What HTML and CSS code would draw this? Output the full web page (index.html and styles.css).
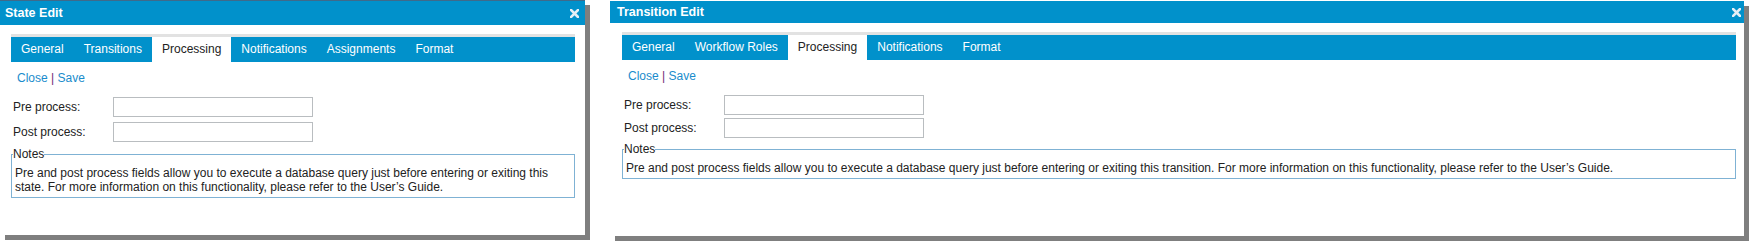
FILE: index.html
```html
<!DOCTYPE html>
<html lang="en">
<head>
    <meta charset="UTF-8">
    <title>Workflow Editors</title>
    <link rel="stylesheet" href="styles.css">
</head>
<body>
    <div class="desk">
        <div class="dialog dialog-state">
            <div class="titlebar">
                <span class="title">State Edit</span>
                <span class="close-btn">
                    <svg width="9" height="9" viewBox="0 0 9 9"><path d="M1 1 L8 8 M8 1 L1 8" stroke="#e6eef5" stroke-width="2.6" stroke-linecap="square"/></svg>
                </span>
            </div>
            <div class="dialog-body">
                <ul class="tabs">
                    <li>General</li>
                    <li>Transitions</li>
                    <li class="active">Processing</li>
                    <li>Notifications</li>
                    <li>Assignments</li>
                    <li>Format</li>
                </ul>
                <div class="actions"><a href="#">Close</a> <span class="sep">|</span> <a href="#">Save</a></div>
                <div class="form">
                    <div class="row"><label for="pre1">Pre process:</label><input type="text" id="pre1"></div>
                    <div class="row"><label for="post1">Post process:</label><input type="text" id="post1"></div>
                </div>
                <fieldset class="notes">
                    <legend>Notes</legend>
                    <p>Pre and post process fields allow you to execute a database query just before entering or exiting this state. For more information on this functionality, please refer to the User’s Guide.</p>
                </fieldset>
            </div>
        </div>

        <div class="dialog dialog-transition">
            <div class="titlebar">
                <span class="title">Transition Edit</span>
                <span class="close-btn">
                    <svg width="9" height="9" viewBox="0 0 9 9"><path d="M1 1 L8 8 M8 1 L1 8" stroke="#e6eef5" stroke-width="2.6" stroke-linecap="square"/></svg>
                </span>
            </div>
            <div class="dialog-body">
                <ul class="tabs">
                    <li>General</li>
                    <li>Workflow Roles</li>
                    <li class="active">Processing</li>
                    <li>Notifications</li>
                    <li>Format</li>
                </ul>
                <div class="actions"><a href="#">Close</a> <span class="sep">|</span> <a href="#">Save</a></div>
                <div class="form">
                    <div class="row"><label for="pre2">Pre process:</label><input type="text" id="pre2"></div>
                    <div class="row"><label for="post2">Post process:</label><input type="text" id="post2"></div>
                </div>
                <fieldset class="notes">
                    <legend>Notes</legend>
                    <p>Pre and post process fields allow you to execute a database query just before entering or exiting this transition. For more information on this functionality, please refer to the User’s Guide.</p>
                </fieldset>
            </div>
        </div>
    </div>
</body>
</html>
```

FILE: styles.css
```css
body {
    margin: 0;
    font-family: "Liberation Sans", Arial, sans-serif;
    font-size: 12px;
    color: #222;
    background-color: #fff;
}

.desk {
    display: flex;
    align-items: flex-start;
    gap: 25px;
    padding-bottom: 10px;
}

.dialog {
    background-color: #fff;
    box-shadow: 5px 5px 0 0 #7f7f7f;
    height: 235px;
    box-sizing: border-box;
}

.dialog-state {
    width: 585px;
    border-top: 1px solid #3f6a8a;
}

.dialog-transition {
    width: 1134px;
    margin-top: 1px;
}

.titlebar {
    background-color: #0191cb;
    color: #fff;
    display: flex;
    justify-content: space-between;
    align-items: center;
    font-weight: bold;
    font-size: 12.5px;
}

.dialog-state .titlebar {
    height: 24px;
    padding: 0 6px 0 5px;
}

.dialog-transition .titlebar {
    height: 22px;
    padding: 0 3px 0 7px;
}

.close-btn {
    display: flex;
}

.dialog-body {
    padding-top: 9px;
}

.dialog-state .dialog-body {
    padding-left: 11px;
    padding-right: 10px;
}

.dialog-transition .dialog-body {
    padding-left: 12px;
    padding-right: 8px;
}

.tabs {
    list-style: none;
    margin: 0;
    padding: 0;
    display: flex;
    border-top: 3px solid #e2e2e2;
    background-color: #0191cb;
}

.tabs li {
    padding: 0 10px;
    line-height: 25px;
    color: #fff;
}

.tabs li.active {
    background-color: #fff;
    color: #222;
}

.actions {
    margin-top: 9px;
    padding-left: 6px;
    line-height: 14px;
}

.actions a {
    color: #1a8ccc;
    text-decoration: none;
}

.actions .sep {
    color: #6e2a78;
}

.form {
    margin-top: 12px;
    display: flex;
    flex-direction: column;
}

.dialog-state .form {
    gap: 5px;
}

.dialog-transition .form {
    gap: 3px;
}

.row {
    display: flex;
    align-items: center;
    height: 20px;
    padding-left: 2px;
}

.row label {
    width: 100px;
}

.row input {
    width: 200px;
    height: 20px;
    box-sizing: border-box;
    margin: 0;
    padding: 0 3px;
    border: 1px solid #b9bdc0;
    font: inherit;
}

.notes {
    margin: 5px 0 0;
    padding: 5px 3px 3px;
    border: 1px solid #7fb2d4;
    min-width: 0;
}

.dialog-transition .notes {
    margin-top: 4px;
}

.notes legend {
    padding: 0;
    margin-left: -2px;
    line-height: 14px;
}

.notes p {
    margin: 0;
    line-height: 14px;
}
```
